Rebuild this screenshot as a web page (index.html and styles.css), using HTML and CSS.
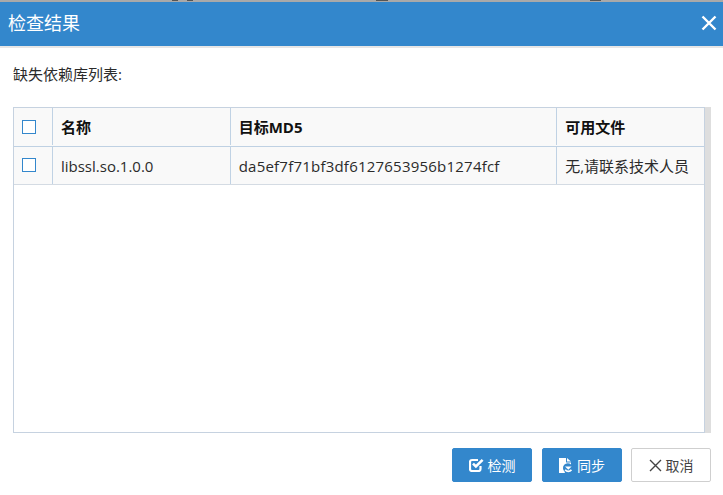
FILE: index.html
```html
<!DOCTYPE html>
<html lang="zh-CN">
<head>
<meta charset="utf-8">
<title>检查结果</title>
<link rel="stylesheet" href="styles.css">
</head>
<body>
<div class="topstrip"></div>
<header class="head">
  <h1 class="title">检查结果</h1>
  <svg class="close" width="18" height="18" viewBox="0 0 18 18"><path d="M2.5 2.5 L15.5 15.5 M15.5 2.5 L2.5 15.5" stroke="#fff" stroke-width="2.4" fill="none"/></svg>
</header>
<main class="content">
  <p class="label">缺失依赖库列表:</p>
  <div class="panel">
    <div class="tablebox">
      <div class="row row-head">
        <div class="cell c1"><span class="check"></span></div>
        <div class="cell c2">名称</div>
        <div class="cell c3">目标MD5</div>
        <div class="cell c4">可用文件</div>
      </div>
      <div class="row row-body">
        <div class="cell c1"><span class="check check-body"></span></div>
        <div class="cell c2">libssl.so.1.0.0</div>
        <div class="cell c3 md5">da5ef7f71bf3df6127653956b1274fcf</div>
        <div class="cell c4">无,请联系技术人员</div>
      </div>
    </div>
    <div class="scrollbar"></div>
  </div>
  <div class="actions">
    <button class="btn primary"><svg class="ico" width="15" height="14" viewBox="0 0 15 14"><path d="M11.5 8 V11 A2 2 0 0 1 9.5 13 H3 A2 2 0 0 1 1 11 V4 A2 2 0 0 1 3 2 H9" fill="none" stroke="#fff" stroke-width="2.2"/><path d="M4 5.6 L6.9 8.5 L13.6 1.8" fill="none" stroke="#fff" stroke-width="2.6"/></svg>检测</button>
    <button class="btn primary sync"><svg class="ico" width="13" height="15" viewBox="0 0 13 15"><path d="M0 0 H7 V4.5 H12 V6.5 A4.5 4.5 0 0 0 5.5 13.5 L6 15 H0 Z" fill="#fff"/><path d="M8 0 L12 3.6 H8 Z" fill="#fff"/><path d="M6 8.5 H12.6 L9.3 11.8 Z" fill="#fff"/><path d="M6.2 11.8 A3.8 3.8 0 0 0 12.4 11.8" fill="none" stroke="#fff" stroke-width="1.7"/></svg>同步</button>
    <button class="btn plain"><svg class="ico" width="13" height="13" viewBox="0 0 13 13"><path d="M1 1 L12 12 M12 1 L1 12" stroke="#444" stroke-width="1.4" fill="none"/></svg>取消</button>
  </div>
</main>
</body>
</html>
```
FILE: styles.css
```css
* { box-sizing: border-box; }
html, body { margin: 0; padding: 0; }
body {
  width: 723px;
  height: 495px;
  overflow: hidden;
  background: #fff;
  color: #2b2b2b;
  font-family: "Open Sans", "Noto Sans CJK SC", sans-serif;
  font-size: 15px;
}
.topstrip {
  height: 2px;
  background-color: #a9a9a9;
  background-image:
    linear-gradient(#555 50%, transparent 50%),
    linear-gradient(#555 50%, transparent 50%),
    linear-gradient(#555 50%, transparent 50%),
    linear-gradient(#555 50%, transparent 50%);
  background-repeat: no-repeat;
  background-size: 6px 2px, 6px 2px, 12px 2px, 11px 2px;
  background-position: 172px 0, 187px 0, 376px 0, 590px 0;
}
.head {
  height: 44px;
  background: #3387cc;
  box-shadow: 0 2px 0 #e6e6e6;
  display: flex;
  align-items: center;
  justify-content: space-between;
  padding: 0 5px 2px 8px;
}
.title {
  margin: 0;
  font-size: 18px;
  line-height: 24px;
  font-weight: 400;
  color: #fff;
}
.content { padding: 0 12px 0 13px; }
.label { margin: 0; padding-top: 19px; height: 61px; line-height: 19px; }
.panel {
  height: 326px;
  display: flex;
  width: 698px;
}
.tablebox {
  width: 692px;
  height: 326px;
  border: 1px solid #c6d2e0;
}
.scrollbar { width: 6px; background: #dedede; }
.row { display: flex; background: #f9f9f9; }
.row-head { height: 39px; border-bottom: 1px solid #bfd1e3; font-weight: 700; color: #111; padding-bottom: 1px; }
.row-body { height: 38px; border-bottom: 1px solid #d4dbe3; }
.cell {
  display: flex;
  align-items: center;
  padding-left: 8px;
  border-right: 1px solid #c0d2e4;
  white-space: nowrap;
}
.c1 { width: 39px; }
.c2 { width: 178px; }
.c3 { width: 327px; }
.c4 { width: 147px; border-right: 0; }
.md5 { letter-spacing: 0.22px; }
.check {
  width: 14px;
  height: 14px;
  border: 1px solid #3387cc;
  background: #fff;
  display: block;
}
.check-body { margin-bottom: 2px; }
.actions {
  display: flex;
  justify-content: flex-end;
  gap: 10px;
  padding-top: 15px;
  width: 698px;
}
.btn {
  height: 34px;
  width: 80px;
  border-radius: 2px;
  font: inherit;
  font-size: 14px;
  display: flex;
  align-items: center;
  justify-content: center;
  gap: 4px;
  padding: 0;
}
.primary { background: #3387cc; border: 1px solid #3387cc; color: #fff; }
.primary.sync { gap: 5px; margin-right: -1px; }
.plain { background: #fff; border: 1px solid #cfcfcf; color: #444; }
```
